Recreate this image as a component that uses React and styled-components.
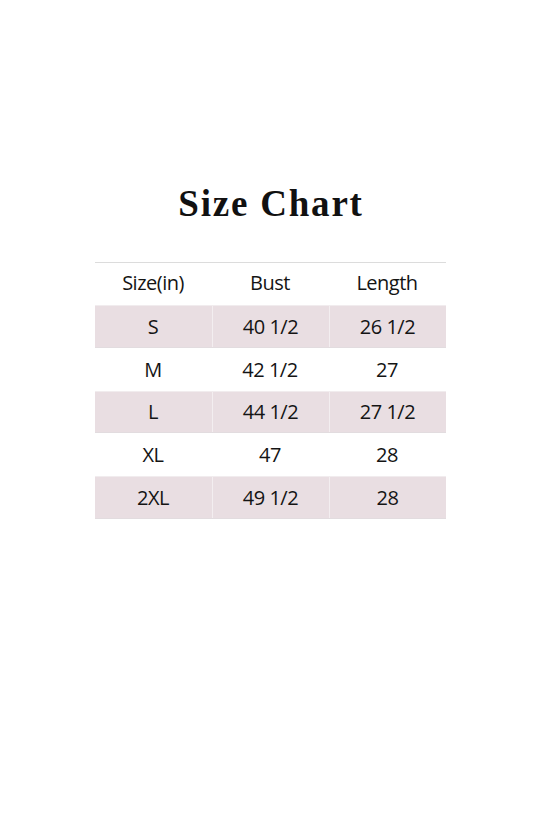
import styled, { createGlobalStyle } from "styled-components";

const GlobalStyle = createGlobalStyle`
    body {
        margin: 0;
        background: #ffffff;
    }
`;

const Page = styled.div`
    width: 550px;
    height: 825px;
    display: flex;
    flex-direction: column;
    align-items: center;
    padding: 180px 10px 0 0;
    box-sizing: border-box;
`;

const Title = styled.h1`
    font-family: "Liberation Serif", "Times New Roman", serif;
    font-weight: 700;
    font-size: 37px;
    letter-spacing: 1.8px;
    line-height: 48px;
    color: #111;
    margin: 0 0 34px 2px;
`;

const Table = styled.div`
    width: 351px;
    border-top: 1px solid #dcdcdc;
    display: flex;
    flex-direction: column;
`;

const Row = styled.div`
    display: grid;
    grid-template-columns: repeat(3, 1fr);
    height: ${(p) => (p.$header ? "42px" : "42.8px")};
    padding-bottom: ${(p) => (p.$header ? "3px" : "0")};
    background: ${(p) => (p.$shaded ? "#e9dee2" : "#ffffff")};
    border-top: ${(p) => (p.$shaded ? "1px solid #f1ecee" : "none")};
    border-bottom: ${(p) => (p.$shaded ? "1px solid #e2dcdf" : "none")};
    box-sizing: border-box;
`;

const Cell = styled.div`
    display: flex;
    align-items: center;
    justify-content: center;
    font-family: "Open Sans", "Noto Sans", sans-serif;
    font-size: 20px;
    letter-spacing: -0.5px;
    color: #141414;
    border-left: ${(p) => (p.$divider ? "1px solid #f3eef0" : "none")};
`;

const rows = [
    ["S", "40 1/2", "26 1/2"],
    ["M", "42 1/2", "27"],
    ["L", "44 1/2", "27 1/2"],
    ["XL", "47", "28"],
    ["2XL", "49 1/2", "28"],
];

export default function App() {
    return (
        <>
            <GlobalStyle />
            <Page>
                <Title>Size Chart</Title>
                <Table>
                    <Row $header>
                        <Cell>Size(in)</Cell>
                        <Cell>Bust</Cell>
                        <Cell>Length</Cell>
                    </Row>
                    {rows.map((r, i) => {
                        const shaded = i % 2 === 0;
                        return (
                            <Row key={r[0]} $shaded={shaded}>
                                {r.map((v, j) => (
                                    <Cell key={j} $divider={shaded && j > 0}>{v}</Cell>
                                ))}
                            </Row>
                        );
                    })}
                </Table>
            </Page>
        </>
    );
}
